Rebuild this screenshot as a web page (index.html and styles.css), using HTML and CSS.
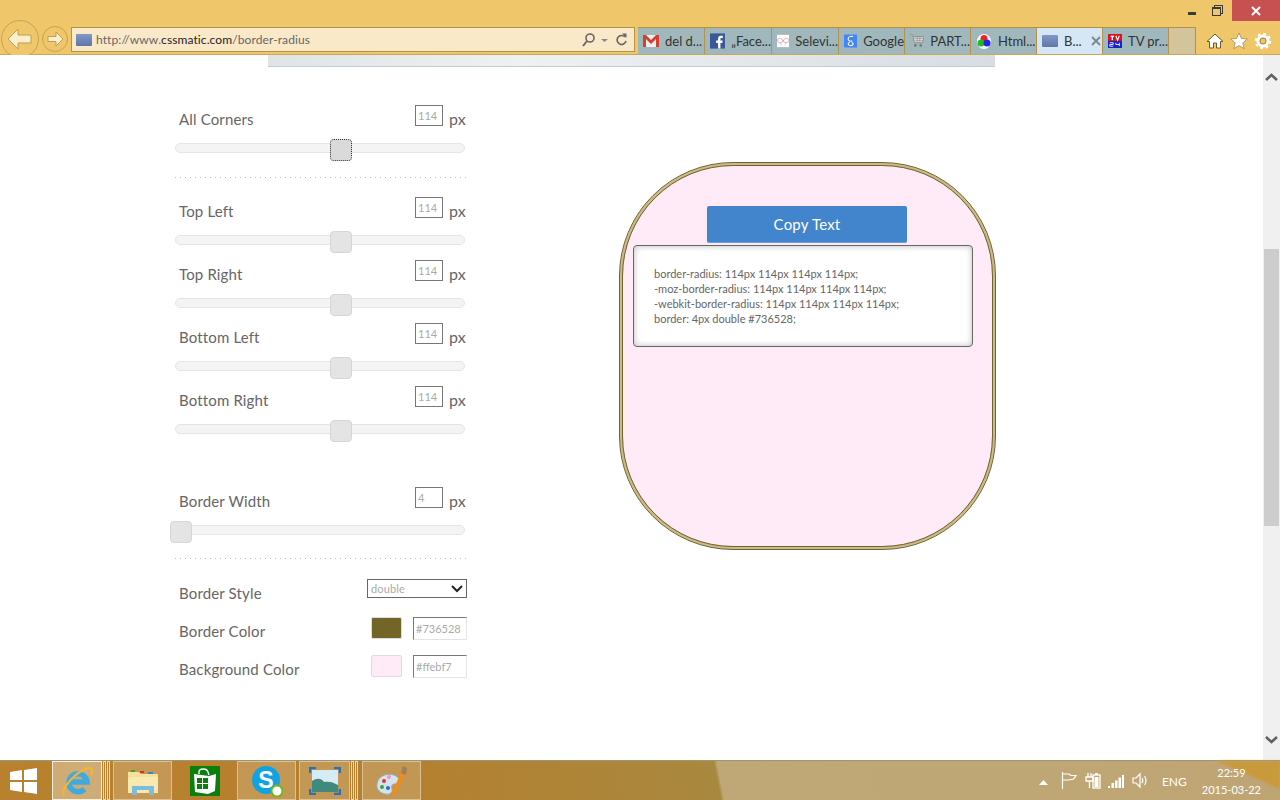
FILE: index.html
```html
<!DOCTYPE html>
<html lang="en">

<head>
    <meta charset="UTF-8">
    <title>Border Radius</title>
    <link rel="stylesheet" href="styles.css">
</head>

<body>
    <div class="window">
        <div class="chrome">
            <div class="caption">
                <span class="cap-min"></span>
                <span class="cap-restore"></span>
                <span class="cap-close">
                    <svg width="12" height="12" viewBox="0 0 12 12"><path d="M2 2l8 8M10 2l-8 8" stroke="#fff" stroke-width="2"/></svg>
                </span>
            </div>
            <div class="toolbar">
                <svg class="nav-buttons" width="70" height="35" viewBox="0 0 70 35">
                    <circle cx="20" cy="19" r="18.500" fill="#efc66a" stroke="#c4a454"/>
                    <path d="M8 19l10-10v6h13v8H18v6z" fill="#fbeecb" stroke="#bd9f55"/>
                    <circle cx="55" cy="19" r="12.500" fill="#efc66a" stroke="#c4a454"/>
                    <path d="M63 19l-7-7v4.500h-8v5h8v4.500z" fill="#fbeecb" stroke="#bd9f55"/>
                </svg>
                <div class="address">
                    <span class="favicon"></span>
                    <span class="url">http://www.<b>cssmatic.com</b>/border-radius</span>
                    <svg class="addr-icons" width="48" height="16" viewBox="0 0 48 16">
                        <circle cx="8" cy="6" r="4" fill="none" stroke="#666" stroke-width="1.600"/>
                        <path d="M5 9l-4 5" stroke="#666" stroke-width="2"/>
                        <path d="M19 7h7l-3.500 3z" fill="#888"/>
                        <path d="M43 5a4.500 4.500 0 1 0 1 4" fill="none" stroke="#666" stroke-width="1.600"/>
                        <path d="M40 1.500l4.500 0 0 4.500z" fill="#666"/>
                    </svg>
                </div>
                <div class="tabs">
                    <div class="tab tab-w67">
                        <svg width="16" height="16" viewBox="0 0 16 16"><rect y="2" width="16" height="12" fill="#eee"/><path d="M0 2h3l5 5 5-5h3v12h-3V6L8 11 3 6v8H0z" fill="#d2412f"/></svg>
                        <span>del d...</span>
                    </div>
                    <div class="tab tab-w67">
                        <svg width="16" height="16" viewBox="0 0 16 16"><rect width="16" height="16" fill="#3b5998"/><path d="M11 16V10h2l.4-2.500H11V6c0-.8.3-1.200 1.200-1.200h1.300V2.500h-2C9.500 2.500 8.500 3.700 8.500 5.700v1.800H6.500V10h2v6z" fill="#fff"/></svg>
                        <span>„Face...</span>
                    </div>
                    <div class="tab tab-w67">
                        <svg width="16" height="16" viewBox="0 0 16 16"><rect width="16" height="16" fill="#fff"/><path d="M8 8C6 3 .5 4 .5 7s4.500 5 7.500 1c3 4 7.500 2 7.500-1S10 3 8 8zM4 11l2 2M12 11l-2 2" fill="none" stroke="#d98aa0"/></svg>
                        <span>Selevi...</span>
                    </div>
                    <div class="tab tab-w66">
                        <svg width="16" height="16" viewBox="0 0 16 16"><rect width="16" height="16" rx="1" fill="#4285f4"/><path d="M11 2.500C8 1.500 5 3 5 5.500S8.500 9 10 7.500M7 9.500c-3 1-2.500 4 1 4s4-2.500 1.500-4" fill="none" stroke="#fff" stroke-width="1.300"/></svg>
                        <span>Google</span>
                    </div>
                    <div class="tab tab-w66">
                        <svg width="16" height="16" viewBox="0 0 16 16"><path d="M0 1h3l2 9h9l2-7H4" fill="#d5d5d5" stroke="#8a8a8a"/><path d="M5 5h10M6 7.500h8M8 3v7M11 3v7" stroke="#8a8a8a" stroke-width=".6"/><circle cx="6" cy="13" r="1.500" fill="#777"/><circle cx="12" cy="13" r="1.500" fill="#777"/></svg>
                        <span>PART...</span>
                    </div>
                    <div class="tab tab-w66">
                        <svg width="16" height="16" viewBox="0 0 16 16"><ellipse cx="8" cy="8.500" rx="7" ry="7.500" fill="#fff"/><circle cx="8" cy="5.500" r="3.500" fill="#e22"/><circle cx="5" cy="10" r="3.500" fill="#2b2"/><circle cx="11" cy="10" r="3.500" fill="#22e"/></svg>
                        <span>Html...</span>
                    </div>
                    <div class="tab tab-w66 tab-active">
                        <span class="favicon"></span>
                        <span>B...</span>
                        <svg class="tab-close" width="10" height="10" viewBox="0 0 10 10"><path d="M1 1l8 8M9 1l-8 8" stroke="#7d8a96" stroke-width="2"/></svg>
                    </div>
                    <div class="tab tab-w66">
                        <svg width="16" height="16" viewBox="0 0 16 16"><rect width="16" height="8" fill="#d8121b"/><rect y="8" width="16" height="8" fill="#1420c8"/><rect x="3" y="2" width="4" height="1.500" fill="#fff"/><rect x="4.200" y="2" width="1.500" height="5" fill="#fff"/><path d="M9 2l2 5 2-5" fill="none" stroke="#fff" stroke-width="1.300"/><path d="M2 10h4v2H2v2h4M9 10v2h4M13 10v4" fill="none" stroke="#fff"/></svg>
                        <span>TV pr...</span>
                    </div>
                    <div class="tab-new"></div>
                </div>
                <div class="tools">
                    <svg width="18" height="18" viewBox="0 0 18 18"><path d="M9 2L1 9.500h2.500V16h4v-5h3v5h4V9.500H17z" fill="#fff" stroke="#6d5a2c"/></svg>
                    <svg width="18" height="18" viewBox="0 0 18 18"><path d="M9 1l2.400 5.400 5.800.6-4.400 3.900 1.300 5.700L9 13.600l-5.100 3 1.300-5.700L.8 7l5.800-.6z" fill="#fff" stroke="#8a7434" stroke-width=".6"/></svg>
                    <svg width="18" height="18" viewBox="0 0 18 18"><circle cx="9" cy="9" r="5" fill="none" stroke="#fff" stroke-width="3"/><circle cx="9" cy="9" r="7" fill="none" stroke="#fff" stroke-width="2.500" stroke-dasharray="2.700 2.800"/><circle cx="9" cy="9" r="3" fill="none" stroke="#7d6a38" stroke-width=".7"/></svg>
                </div>
            </div>
        </div>

        <div class="viewport">
            <div class="page">
                <div class="banner-edge"></div>
                <div class="content">
                    <div class="controls">
                        <div class="slider-row">
                            <div class="field-head">
                                <label>All Corners</label>
                                <input class="num" value="114"><span class="unit">px</span>
                            </div>
                            <div class="track"><span class="handle handle-focus" style="left: 154px"></span></div>
                        </div>
                        <div class="dots dots-top"></div>
                        <div class="slider-row">
                            <div class="field-head">
                                <label>Top Left</label>
                                <input class="num" value="114"><span class="unit">px</span>
                            </div>
                            <div class="track"><span class="handle" style="left: 154px"></span></div>
                        </div>
                        <div class="slider-row">
                            <div class="field-head">
                                <label>Top Right</label>
                                <input class="num" value="114"><span class="unit">px</span>
                            </div>
                            <div class="track"><span class="handle" style="left: 154px"></span></div>
                        </div>
                        <div class="slider-row">
                            <div class="field-head">
                                <label>Bottom Left</label>
                                <input class="num" value="114"><span class="unit">px</span>
                            </div>
                            <div class="track"><span class="handle" style="left: 154px"></span></div>
                        </div>
                        <div class="slider-row">
                            <div class="field-head">
                                <label>Bottom Right</label>
                                <input class="num" value="114"><span class="unit">px</span>
                            </div>
                            <div class="track"><span class="handle" style="left: 154px"></span></div>
                        </div>
                        <div class="slider-row slider-border">
                            <div class="field-head">
                                <label>Border Width</label>
                                <input class="num" value="4"><span class="unit">px</span>
                            </div>
                            <div class="track"><span class="handle" style="left: -6px"></span></div>
                        </div>
                        <div class="dots dots-bottom"></div>
                        <div class="style-row">
                            <label>Border Style</label>
                            <div class="fake-select">
                                <span>double</span>
                                <svg width="12" height="8" viewBox="0 0 12 8"><path d="M1 1l5 5 5-5" fill="none" stroke="#222" stroke-width="2"/></svg>
                            </div>
                        </div>
                        <div class="color-row">
                            <label>Border Color</label>
                            <span class="swatch swatch-border"></span>
                            <input class="hex" value="#736528">
                        </div>
                        <div class="color-row">
                            <label>Background Color</label>
                            <span class="swatch swatch-bg"></span>
                            <input class="hex" value="#ffebf7">
                        </div>
                    </div>

                    <div class="preview">
                        <button class="copy-btn">Copy Text</button>
                        <div class="code-box">
                            border-radius: 114px 114px 114px 114px;<br>
                            -moz-border-radius: 114px 114px 114px 114px;<br>
                            -webkit-border-radius: 114px 114px 114px 114px;<br>
                            border: 4px double #736528;
                        </div>
                    </div>
                </div>
            </div>
            <div class="scrollbar">
                <svg width="17" height="12" viewBox="0 0 17 12"><path d="M3 9l5.500-5L14 9" fill="none" stroke="#606060" stroke-width="2.500"/></svg>
                <div class="scroll-space"><div class="scroll-thumb"></div></div>
                <svg width="17" height="12" viewBox="0 0 17 12"><path d="M3 3l5.500 5L14 3" fill="none" stroke="#606060" stroke-width="2.500"/></svg>
            </div>
        </div>

        <div class="taskbar">
            <svg class="wedge" width="63" height="30" viewBox="0 0 63 30"><path d="M0 0h63v28z" fill="#c99a3c"/></svg>
            <svg class="start" width="28" height="26" viewBox="0 0 28 26"><path d="M0 4l12-2v10H0zM14 2l13-2v12H14zM0 14h12v10L0 22zM14 14h13v12l-13-2z" fill="#fff"/></svg>
            <div class="task-stack task-ie">
                <div class="task task-on">
                    <svg width="34" height="34" viewBox="0 0 34 34"><path d="M10 18h17A9 9 0 1 0 24.500 25" fill="none" stroke="#3fa9e0" stroke-width="5.500"/><path d="M4 31C0 26 15 8 28 4c4-1 5 2 3 7" fill="none" stroke="#f2b632" stroke-width="2.200"/></svg>
                </div>
                <span class="stack-edge"></span><span class="stack-edge"></span>
            </div>
            <div class="task task-w59">
                <svg width="32" height="30" viewBox="0 0 32 30"><path d="M1 6h11l2 2h17v19H1z" fill="#f6e09a"/><path d="M1 11h30v16H1z" fill="#f9e8b0"/><rect x="4" y="4" width="4" height="2" fill="#3a3"/><rect x="13" y="5" width="4" height="2" fill="#c33"/><rect x="21" y="6" width="5" height="2" fill="#38c"/><path d="M5 20h22v9h-5v-5H10v5H5z" fill="#7cbce0"/></svg>
            </div>
            <div class="task-store">
                <svg width="30" height="30" viewBox="0 0 30 30"><rect width="30" height="30" fill="#0a7f0a"/><path d="M4 8l15 2 7-2-1 17-7 3-13-2z" fill="#fff"/><path d="M9 8V6c0-4 8-4 9 0l1 3" fill="none" stroke="#fff" stroke-width="1.300"/><path d="M7 12h5v5H7zM13 12h5v5h-5zM7 18h5v5H7zM13 18h5v5h-5z" fill="#0a7f0a"/></svg>
            </div>
            <div class="task task-w59">
                <svg width="32" height="32" viewBox="0 0 32 32"><circle cx="15" cy="15" r="14" fill="#10a3e3"/><text x="15" y="23" font-family="Liberation Sans" font-size="23" font-weight="700" fill="#fff" text-anchor="middle">S</text><circle cx="26" cy="26" r="5.500" fill="#fff" stroke="#6fb51e" stroke-width="2"/></svg>
            </div>
            <div class="task-stack task-photo">
                <div class="task task-on-off">
                    <svg width="32" height="28" viewBox="0 0 32 28"><rect x="3" y="3" width="26" height="22" fill="#d6ecf4"/><path d="M3 14c5-3 9-3 12 1 5-1 9 0 14 3v7H3z" fill="#3f8a7d"/><path d="M1 6V1h6M25 1h6v5M31 22v5h-6M7 27H1v-5" fill="none" stroke="#2b6fb5" stroke-width="2.500"/></svg>
                </div>
                <span class="stack-edge"></span><span class="stack-edge"></span>
            </div>
            <div class="task task-w59">
                <svg width="32" height="32" viewBox="0 0 32 32"><path d="M1 19C2 10 13 7 20 11c5 3 3 8-1 8-3 0-4 2-3 5 1 4-3 6-7 5-5-1-9-5-8-10z" fill="#d5e3ee" stroke="#9ab"/><circle cx="8" cy="16" r="2" fill="#d33"/><circle cx="13" cy="12" r="2" fill="#e9b"/><circle cx="6" cy="22" r="2" fill="#3a3"/><circle cx="12" cy="23" r="2" fill="#36c"/><path d="M17 30L27 8" stroke="#f08c1a" stroke-width="4"/><path d="M25 8l2-7 4 2-1 7z" fill="#a67c52"/></svg>
            </div>
            <div class="tray">
                <svg class="tray-up" width="9" height="5" viewBox="0 0 9 5"><path d="M0 5l4.500-5L9 5z" fill="#fff"/></svg>
                <svg width="16" height="17" viewBox="0 0 16 17"><path d="M1.500 0v17M2 2h6l2 1.500h5L12.500 7l-5 1H2" fill="none" stroke="#fff" stroke-width="1.200"/></svg>
                <svg class="tray-batt" width="16" height="17" viewBox="0 0 16 17"><rect x="8" y="3" width="7" height="13" fill="none" stroke="#fff" stroke-width="1.300"/><rect x="10" y="1" width="3" height="2" fill="#fff"/><rect x="9.500" y="5" width="4" height="10" fill="#fff"/><path d="M3 1v4M6 1v4M1 5h7v4H1zM4.500 9v7" fill="none" stroke="#fff" stroke-width="1.300"/></svg>
                <svg width="16" height="14" viewBox="0 0 16 14"><path d="M0 12h2v2H0zM3.500 9h2.500v5H3.500zM7 6.500h2.500V14H7zM10.500 3.500H13V14h-2.500zM14 1h2v13h-2z" fill="#fff"/></svg>
                <svg width="17" height="17" viewBox="0 0 17 17"><path d="M1 6h3l4-4v13l-4-4H1z" fill="none" stroke="#fff" stroke-width="1.200"/><path d="M10 6c1 1.500 1 3.500 0 5M12.500 4c2 2.500 2 6.500 0 9" fill="none" stroke="#fff" stroke-width="1.200"/></svg>
                <span class="lang">ENG</span>
                <div class="clock">
                    <span class="clock-time">22:59</span>
                    <span>2015-03-22</span>
                </div>
            </div>
        </div>
    </div>
</body>

</html>
```

FILE: styles.css
```css
html,
body {
    margin: 0;
    background: #fff;
}

body {
    font-family: "Lato", "Noto Sans", sans-serif;
    overflow: hidden;
}

.window {
    width: 1280px;
    height: 800px;
    display: flex;
    flex-direction: column;
}

/* browser chrome */
.chrome {
    height: 55px;
    flex: none;
    background: #efc66a;
    display: flex;
    flex-direction: column;
    box-sizing: border-box;
    border-bottom: 1px solid #c9a85a;
}

.caption {
    height: 27px;
    flex: none;
    display: flex;
    justify-content: flex-end;
    align-items: flex-start;
}

.cap-min {
    width: 8px;
    height: 3px;
    background: #3a3a3a;
    margin: 12px 16px 0 0;
}

.cap-restore {
    width: 7px;
    height: 6px;
    border: 1px solid #3a3a3a;
    border-top-width: 2px;
    margin: 7px 11px 0 0;
    box-shadow: 2px -2px 0 -1px #efc66a, 2px -2px 0 0 #3a3a3a;
}

.cap-close {
    width: 48px;
    height: 21px;
    background: #c75050;
    display: flex;
    align-items: center;
    justify-content: center;
}

.toolbar {
    flex: 1;
    display: flex;
    align-items: stretch;
    min-height: 0;
}

.nav-buttons {
    flex: none;
    margin-right: 1px;
    margin-top: -7px;
}

.address {
    width: 564px;
    height: 25px;
    flex: none;
    box-sizing: border-box;
    border: 1px solid #b3934a;
    background: #f9e9c8;
    display: flex;
    align-items: center;
    padding: 0 4px;
    font-size: 12px;
    color: #666;
}

.favicon {
    width: 16px;
    height: 12px;
    flex: none;
    background: linear-gradient(#8398c8, #5f76a8);
    border-radius: 1px;
}

.url {
    flex: 1;
    margin-left: 4px;
    letter-spacing: .1px;
}

.url b {
    font-weight: 400;
    color: #222;
}

.tabs {
    display: flex;
    margin-left: 3px;
    width: 558px;
    flex: none;
}

.tab {
    box-sizing: border-box;
    background: #a0b8bc;
    border: 1px solid #b3934a;
    border-left: 0;
    border-bottom: 0;
    display: flex;
    align-items: center;
    gap: 6px;
    padding-left: 5px;
    font-size: 13px;
    color: #333;
    white-space: nowrap;
    overflow: hidden;
}

.tab-w67 {
    width: 67px;
}

.tab-w66 {
    width: 66px;
}

.tab-active {
    background: #d5e6f5;
}

.tab-close {
    margin-left: 3px;
}

.tab-new {
    width: 27px;
    background: #d3c49b;
    box-sizing: border-box;
    border-top: 1px solid #b3934a;
    border-right: 1px solid #b3934a;
}

.tools {
    flex: 1;
    display: flex;
    gap: 6px;
    align-items: center;
    padding-left: 10px;
}

/* page area */
.viewport {
    flex: 1;
    display: flex;
    min-height: 0;
}

.page {
    flex: 1;
    min-width: 0;
}

.banner-edge {
    width: 727px;
    height: 12px;
    margin-left: 268px;
    box-sizing: border-box;
    background: linear-gradient(90deg, #dfe4e6, #eef1f2 35%, #d8dde2);
    border-bottom: 1px solid #c5cbd0;
}

.content {
    display: flex;
    align-items: flex-start;
    padding-left: 175px;
}

.controls {
    width: 292px;
    flex: none;
    padding-top: 38px;
    color: #666;
    font-size: 15px;
    letter-spacing: .15px;
}

.slider-row {
    height: 63px;
    box-sizing: border-box;
}

.slider-border {
    margin-top: 38px;
}

.field-head {
    display: flex;
    align-items: flex-start;
    width: 290px;
    height: 38px;
}

.field-head label {
    flex: 1;
    padding: 5px 0 0 4px;
}

.num {
    width: 28px;
    height: 21px;
    box-sizing: border-box;
    border: 1px solid #777;
    padding: 0 0 1px 2px;
    font: 11px "Lato", "Noto Sans", sans-serif;
    color: #aaa;
    background: #fff;
    border-radius: 0;
}

.unit {
    width: 16px;
    margin: 4px 0 0 6px;
    font-size: 16px;
    letter-spacing: 0;
}

.track {
    width: 290px;
    height: 10px;
    box-sizing: border-box;
    background: #f4f4f4;
    border: 1px solid #e5e5e5;
    border-radius: 5px;
    position: relative;
}

.handle {
    position: absolute;
    top: -5px;
    width: 22px;
    height: 22px;
    box-sizing: border-box;
    background: #e4e4e4;
    border: 1px solid #d6d6d6;
    border-radius: 4px;
}

.handle-focus {
    background: #dadada;
    border: 1px dotted #333;
}

.dots {
    width: 292px;
    height: 1px;
    background: linear-gradient(90deg, #bbb 1px, transparent 1px) 0 0 / 5px 1px repeat-x;
}

.dots-top {
    margin: 9px 0 19px;
}

.dots-bottom {
    margin: 8px 0 20px;
}

.style-row,
.color-row {
    display: flex;
    align-items: flex-start;
    height: 38px;
}

.style-row label,
.color-row label {
    flex: 1;
    padding: 5px 0 0 4px;
}

.fake-select {
    width: 100px;
    height: 19px;
    box-sizing: border-box;
    border: 1px solid #666;
    display: flex;
    justify-content: space-between;
    align-items: center;
    padding: 0 3px;
    font-size: 11px;
    color: #aaa;
}

.swatch {
    width: 31px;
    height: 22px;
    box-sizing: border-box;
    border: 1px solid #ddd;
    border-radius: 2px;
    margin-right: 11px;
}

.swatch-border {
    background: #736528;
}

.swatch-bg {
    background: #ffebf7;
}

.hex {
    width: 54px;
    height: 23px;
    box-sizing: border-box;
    border: 1px solid #e4e4e4;
    border-top-color: #777;
    border-left-color: #777;
    padding: 0 2px;
    font: 11px "Lato", "Noto Sans", sans-serif;
    color: #aaa;
    border-radius: 0;
}

.preview {
    width: 377px;
    height: 388px;
    box-sizing: border-box;
    flex: none;
    margin: 95px 0 0 152px;
    background: linear-gradient(#ffebf7, #ffebf7) padding-box, linear-gradient(#cbb98f, #cbb98f) border-box;
    border: 4px double #736528;
    border-radius: 114px;
    padding: 40px 0 0 10px;
}

.copy-btn {
    display: block;
    width: 200px;
    height: 37px;
    margin: 0 0 2px 74px;
    background: #4285cc;
    border: 0;
    border-bottom: 1px solid #6a9fd8;
    border-radius: 2px;
    color: #fff;
    font: 15px "Lato", "Noto Sans", sans-serif;
    letter-spacing: .2px;
}

.code-box {
    width: 340px;
    height: 102px;
    box-sizing: border-box;
    background: #fff;
    border: 1px solid #666;
    border-radius: 4px;
    box-shadow: inset 0 0 6px #bbb;
    padding: 20px;
    font-size: 11px;
    line-height: 15px;
    color: #666;
    white-space: nowrap;
}

.scrollbar {
    width: 17px;
    flex: none;
    background: #f0f0f0;
    display: flex;
    flex-direction: column;
    align-items: center;
    padding: 16px 0 14px;
    box-sizing: border-box;
}

.scroll-space {
    flex: 1;
    width: 15px;
    padding-top: 166px;
    box-sizing: border-box;
}

.scroll-thumb {
    height: 277px;
    background: #cdcdcd;
}

/* taskbar */
.taskbar {
    height: 40px;
    flex: none;
    background: linear-gradient(79deg, #b8812e 0, #b5802f 400px, #a8883f 708px, #bfa876 711px, #bfa574 100%);
    border-top: 1px solid #9c9678;
    box-sizing: border-box;
    display: flex;
    align-items: center;
    padding-left: 10px;
    position: relative;
}

.wedge {
    position: absolute;
    right: 0;
    top: 0;
    filter: blur(1px);
}

.start {
    flex: none;
    margin-right: 14px;
}

.task {
    height: 39px;
    box-sizing: border-box;
    background: rgba(255, 255, 255, .18);
    border: 1px solid rgba(255, 255, 255, .4);
    display: flex;
    align-items: center;
    justify-content: center;
}

.task-w59 {
    width: 59px;
    flex: none;
}

.task-on {
    width: 50px;
    background: rgba(255, 255, 255, .34);
    border-color: #f4efe3;
}

.task-on-off {
    width: 51px;
}

.task-stack {
    display: flex;
    flex: none;
    height: 39px;
}

.stack-edge {
    width: 3px;
    margin-left: 1px;
    box-sizing: border-box;
    border: 1px solid rgba(255, 255, 255, .7);
}

.task-ie {
    margin-right: 3px;
}

.task-store {
    width: 30px;
    height: 30px;
    margin: 0 17px 0 18px;
    flex: none;
}

.task-photo {
    margin: 0 4px 0 3px;
}

.tray {
    margin-left: auto;
    display: flex;
    align-items: center;
    position: relative;
    color: #fff;
    gap: 8px;
    padding-right: 19px;
}

.tray-up {
    margin-right: 5px;
    margin-top: 3px;
}

.tray-batt {
    margin-right: -1px;
}

.lang {
    margin: 2px 7px 0 5px;
    font-size: 12px;
}

.clock {
    display: flex;
    flex-direction: column;
    align-items: center;
    font-size: 11px;
    line-height: 17px;
}
```
